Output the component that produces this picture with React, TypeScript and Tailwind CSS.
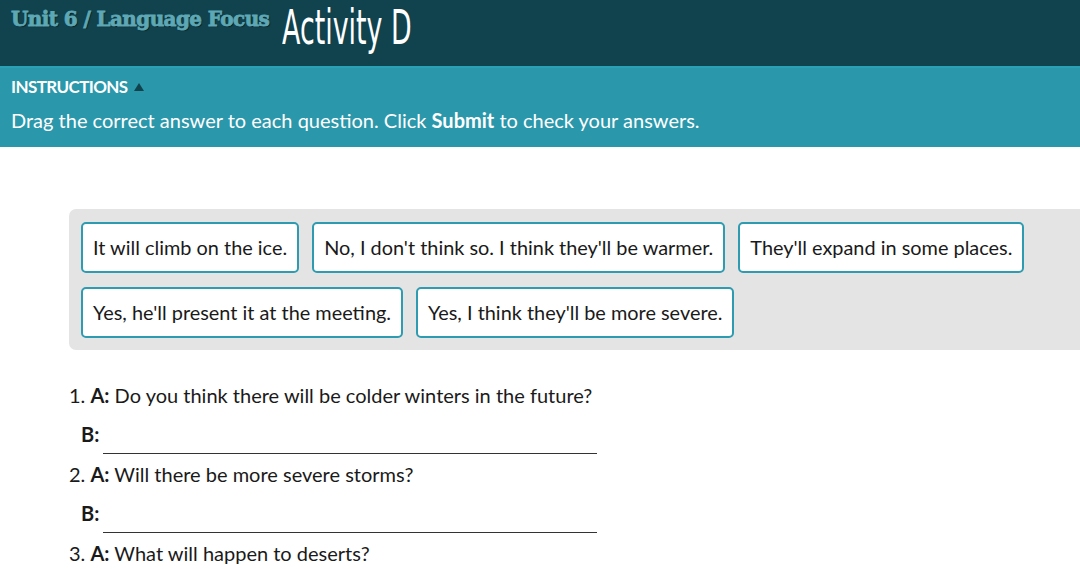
import React from "react";

const answers1 = [
  "It will climb on the ice.",
  "No, I don't think so. I think they'll be warmer.",
  "They'll expand in some places.",
];
const answers2 = [
  "Yes, he'll present it at the meeting.",
  "Yes, I think they'll be more severe.",
];

function Chip({ text }: { text: string }) {
  return (
    <div className="h-[51px] flex items-center px-[10px] bg-white border-2 border-[#2e9bb0] rounded-[5px] text-[19.9px] text-[#1a1a1a] whitespace-nowrap">
      {text}
    </div>
  );
}

function Blank() {
  return (
    <div className="flex items-end pl-[12px] h-[47px]">
      <span className="font-bold text-[20px] text-[#1a1a1a] leading-[24px] mb-[8px] w-[22px]">B:</span>
      <div className="w-[494px] border-b border-[#333] h-[1px]" />
    </div>
  );
}

export default function App() {
  return (
    <div className="w-[1080px] h-[569px] overflow-hidden bg-white" style={{ fontFamily: "Lato, 'Open Sans', sans-serif" }}>
      <div className="h-[66px] bg-[#11434e] flex items-start pl-[11px] pt-[4px]">
        <span
          className="text-[#5ea8b6] text-[20px] font-bold mt-[0px] tracking-[-0.6px]"
          style={{
            fontFamily: "'DejaVu Serif', serif",
            textShadow: "1px 1px 1px rgba(0,0,0,0.6)",
            WebkitTextStroke: "0.8px #5ea8b6",
          }}
        >
          Unit 6 / Language Focus
        </span>
        <span
          className="text-white text-[48px] leading-[50px] -mt-[2px] ml-[13px] inline-block origin-left scale-x-[0.56]"
          style={{ fontFamily: "'DejaVu Sans', sans-serif" }}
        >
          Activity D
        </span>
      </div>
      <div className="h-[81px] bg-[#2a97ab] border-t-[2px] border-[#2aa0b6] pl-[11px] pt-[9px] text-white">
        <div className="flex items-center text-[17px] font-bold tracking-[-0.6px] leading-[20px]">
          INSTRUCTIONS
          <svg className="ml-[5px]" width="12" height="10" viewBox="0 0 12 10">
            <polygon points="6,1 11,9 1,9" fill="#11434e" />
          </svg>
        </div>
        <div className="text-[20px] mt-[12px] leading-[22px]">
          Drag the correct answer to each question. Click <b>Submit</b> to check your answers.
        </div>
      </div>
      <div className="pt-[62px] pl-[69px]">
        <div className="bg-[#e4e4e4] rounded-l-[7px] pl-[12px] pt-[13px] pb-[12px] flex flex-col gap-[14px]">
          <div className="flex gap-[13px]">
            {answers1.map((a) => (
              <Chip key={a} text={a} />
            ))}
          </div>
          <div className="flex gap-[13px]">
            {answers2.map((a) => (
              <Chip key={a} text={a} />
            ))}
          </div>
        </div>
        <div className="mt-[33px] text-[20px] text-[#1a1a1a]">
          <div className="leading-[24px]">
            1. <b>A:</b> Do you think there will be colder winters in the future?
          </div>
          <Blank />
          <div className="leading-[24px] mt-[8px]">
            2. <b>A:</b> Will there be more severe storms?
          </div>
          <Blank />
          <div className="leading-[24px] mt-[8px]">
            3. <b>A:</b> What will happen to deserts?
          </div>
        </div>
      </div>
    </div>
  );
}
